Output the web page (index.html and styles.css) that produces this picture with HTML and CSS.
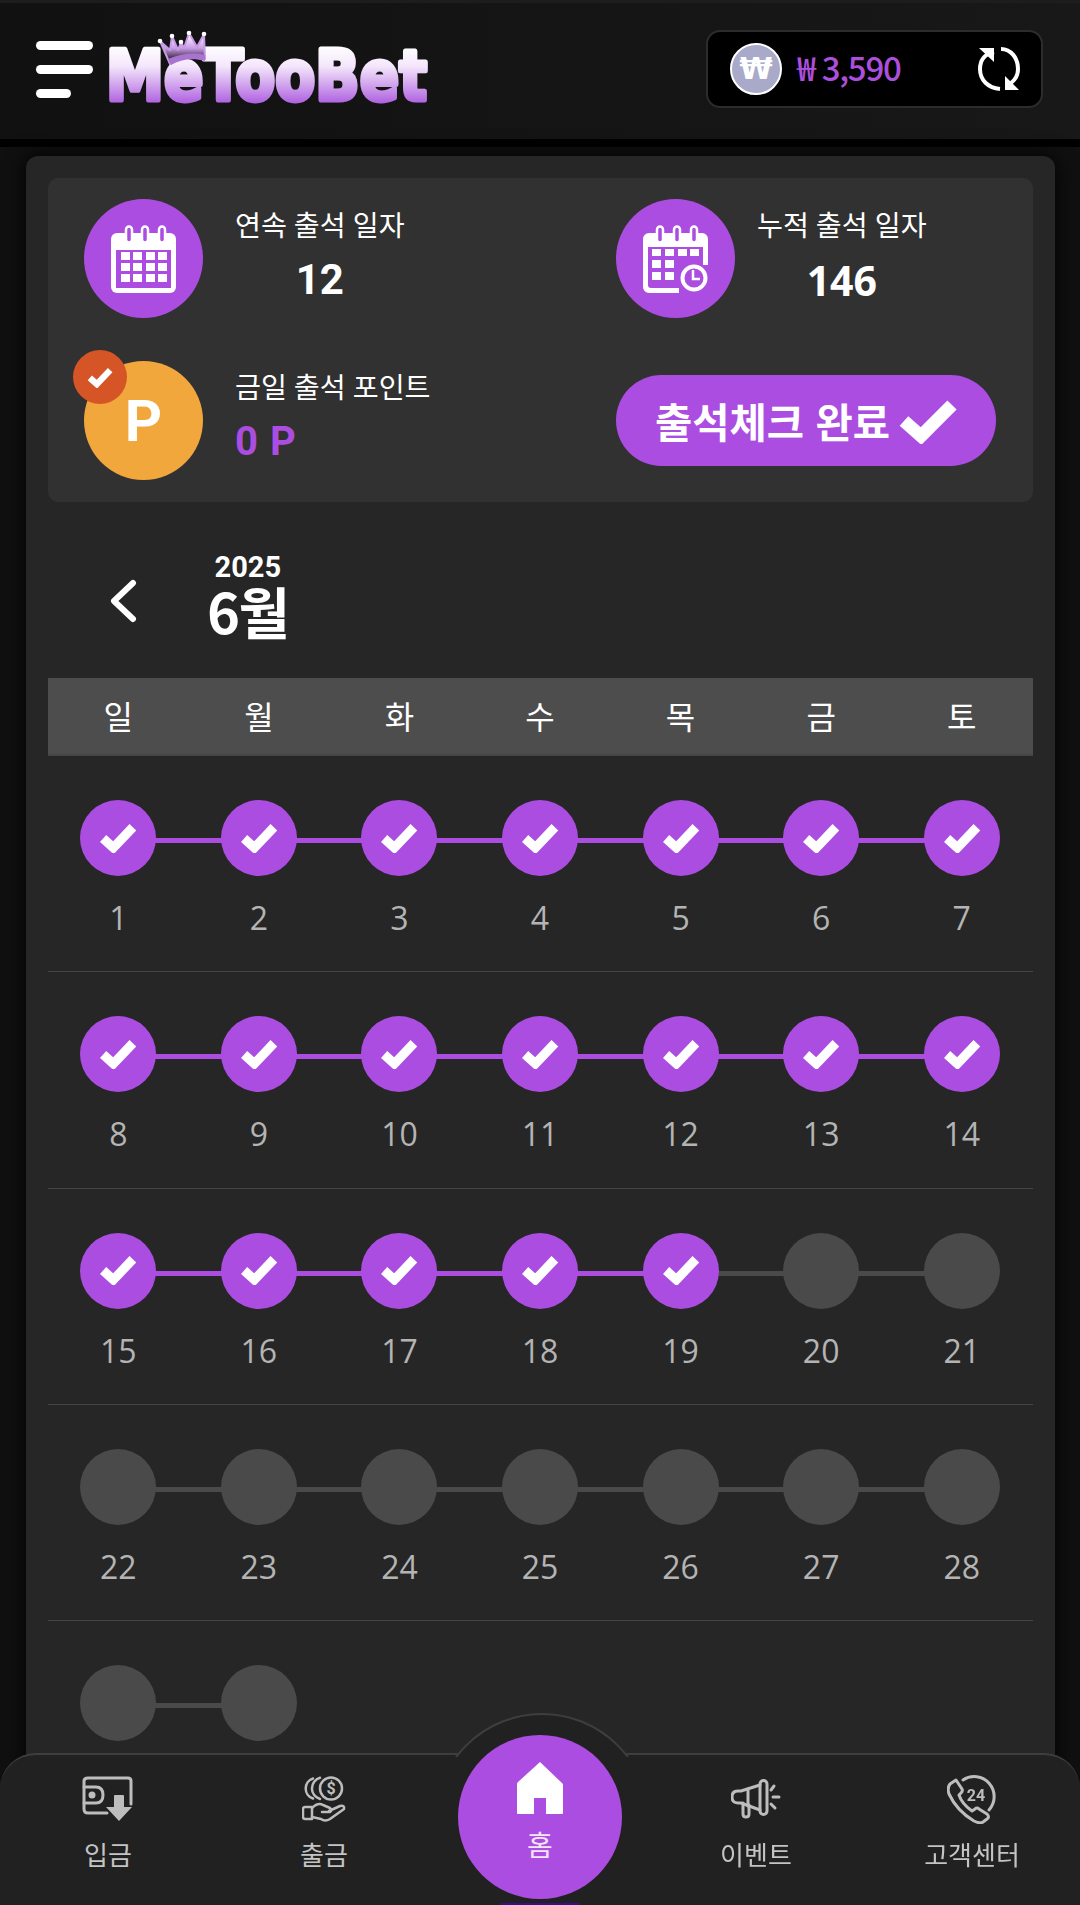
FILE: index.html
```html
<!DOCTYPE html>
<html lang="ko">
<head>
<meta charset="utf-8">
<title>MeTooBet 출석체크</title>
<link rel="stylesheet" href="styles.css">
</head>
<body>
<header class="topbar">
  <button class="burger" aria-label="메뉴"><span></span><span></span><span class="short"></span></button>
  <a class="logo" aria-label="MeTooBet">
    <svg width="330" height="80" viewBox="0 0 330 80">
      <defs>
        <linearGradient id="lg" gradientUnits="userSpaceOnUse" x1="0" y1="16" x2="0" y2="74">
          <stop offset="0" stop-color="#ffffff"/><stop offset=".35" stop-color="#f4e6fb"/><stop offset="1" stop-color="#ad5fdf"/>
        </linearGradient>
        <linearGradient id="cg" gradientUnits="userSpaceOnUse" x1="0" y1="4" x2="0" y2="30">
          <stop offset="0" stop-color="#ffffff"/><stop offset=".55" stop-color="#c79ae6"/><stop offset="1" stop-color="#241a2c"/>
        </linearGradient>
      </defs>
      <text class="logo-text" y="70" x="1" textLength="321" lengthAdjust="spacingAndGlyphs" fill="url(#lg)" stroke="url(#lg)" stroke-width="5" stroke-linejoin="round">MeTooBet</text>
      <path d="M55 11 L65 34 C76 27 88 26 100 29 L99 4 L92 17 L84 3 L79 18 L76 12 L73 20 L67 6 L65 20Z" fill="url(#cg)" stroke="#c79ae6" stroke-width="2" stroke-linejoin="round"/>
      <path d="M63 29 L66 35 C76 29 88 28 100 31 L100 25 C88 22 75 24 63 29Z" fill="#a874d0"/>
      <circle cx="55" cy="11" r="2.3" fill="#fff"/><circle cx="67" cy="6" r="2.3" fill="#fff"/><circle cx="76" cy="12" r="2.3" fill="#fff"/><circle cx="84" cy="3" r="2.3" fill="#fff"/><circle cx="99" cy="4" r="2.3" fill="#fff"/>
    </svg>
  </a>
  <div class="wallet">
    <span class="coin">₩</span>
    <span class="amount"><span class="won">₩</span>3,590</span>
    <svg class="refresh" width="44" height="46" viewBox="0 0 44 46" fill="none" stroke="#fff" stroke-width="4">
      <path d="M17 6 C7 8 3 15 3 23 C3 34 11 42 23 43"/>
      <path d="M24 3 C34 3 41 12 41 23 C41 29 38 34 34 37"/>
      <path d="M2 2 H17 V16Z" fill="#fff" stroke="none"/>
      <path d="M28 30 V44 H42Z" fill="#fff" stroke="none"/>
    </svg>
  </div>
</header>

<main class="card">
  <section class="panel">
    <div class="stat">
      <span class="disc">
        <svg width="66" height="68" viewBox="0 0 66 68">
          <rect x="0" y="8" width="65" height="60" rx="6" fill="#fff"/>
          <rect x="5" y="25" width="55" height="38" fill="#ac4de2"/>
          <g fill="#fff">
            <rect x="10" y="27" width="9" height="8"/><rect x="22" y="27" width="9" height="8"/><rect x="35" y="27" width="9" height="8"/><rect x="47" y="27" width="9" height="8"/>
            <rect x="10" y="38" width="9" height="8"/><rect x="22" y="38" width="9" height="8"/><rect x="35" y="38" width="9" height="8"/><rect x="47" y="38" width="9" height="8"/>
            <rect x="10" y="49" width="9" height="8"/><rect x="22" y="49" width="9" height="8"/><rect x="35" y="49" width="9" height="8"/><rect x="47" y="49" width="9" height="8"/>
          </g>
          <g fill="#ac4de2" stroke="#fff" stroke-width="2.5">
            <rect x="15" y="1.5" width="6" height="16" rx="3"/><rect x="31" y="1.5" width="6" height="16" rx="3"/><rect x="48" y="1.5" width="6" height="16" rx="3"/>
          </g>
        </svg>
      </span>
      <div class="stat-text">
        <span class="stat-label">연속 출석 일자</span>
        <strong class="stat-num roboto">12</strong>
      </div>
    </div>
    <div class="stat stat-right">
      <span class="disc">
        <svg width="66" height="68" viewBox="0 0 66 68">
          <path d="M0 14 a6 6 0 0 1 6-6 H59 a6 6 0 0 1 6 6 V40 H60 V22 H5 V60 q0 3 3 3 H36 V68 H6 a6 6 0 0 1-6-6Z" fill="#fff"/>
          <g fill="#fff">
            <rect x="9" y="24" width="9" height="7"/><rect x="22" y="24" width="9" height="7"/><rect x="35" y="24" width="9" height="7"/><rect x="47" y="24" width="9" height="7"/>
            <rect x="9" y="35" width="9" height="8"/><rect x="22" y="35" width="9" height="8"/>
            <rect x="9" y="47" width="9" height="8"/><rect x="22" y="47" width="9" height="8"/>
          </g>
          <circle cx="51" cy="53" r="15" fill="#ac4de2"/>
          <circle cx="51" cy="53" r="11.5" fill="none" stroke="#fff" stroke-width="4"/>
          <path d="M50 45 V54 H57" fill="none" stroke="#fff" stroke-width="2.5"/>
          <g fill="#ac4de2" stroke="#fff" stroke-width="2.5">
            <rect x="14" y="1.5" width="6" height="16" rx="3"/><rect x="31" y="1.5" width="6" height="16" rx="3"/><rect x="48" y="1.5" width="6" height="16" rx="3"/>
          </g>
        </svg>
      </span>
      <div class="stat-text">
        <span class="stat-label">누적 출석 일자</span>
        <strong class="stat-num stat-num-total opensans">146</strong>
      </div>
    </div>
    <div class="stat">
      <span class="disc disc-point">P
        <span class="badge">
          <svg width="26" height="21" viewBox="0 0 37 29"><polyline points="4,15 14,24 33,4" fill="none" stroke="#fff" stroke-width="9"/></svg>
        </span>
      </span>
      <div class="stat-text stat-text-left">
        <span class="stat-label">금일 출석 포인트</span>
        <strong class="stat-points">0 P</strong>
      </div>
    </div>
    <button class="done-btn">출석체크 완료
      <svg width="58" height="46" viewBox="0 0 58 46"><polyline points="5,23 22,38 53,7" fill="none" stroke="#fff" stroke-width="13"/></svg>
    </button>
  </section>

  <section class="cal-head">
    <svg class="prev" width="28" height="44" viewBox="0 0 28 44"><polyline points="24,4 5,22 24,40" fill="none" stroke="#fff" stroke-width="6" stroke-linecap="round" stroke-linejoin="round"/></svg>
    <div class="cal-title">
      <span class="cal-year">2025</span>
      <span class="cal-month">6월</span>
    </div>
  </section>

  <div class="weekdays"><span>일</span><span>월</span><span>화</span><span>수</span><span>목</span><span>금</span><span>토</span></div>

  <div class="week">
    <div class="day done"><i class="dot"><svg class="tick" viewBox="0 0 37 29"><polyline points="4,15 14,24 33,4"/></svg></i><b>1</b></div>
    <div class="day done"><i class="dot"><svg class="tick" viewBox="0 0 37 29"><polyline points="4,15 14,24 33,4"/></svg></i><b>2</b></div>
    <div class="day done"><i class="dot"><svg class="tick" viewBox="0 0 37 29"><polyline points="4,15 14,24 33,4"/></svg></i><b>3</b></div>
    <div class="day done"><i class="dot"><svg class="tick" viewBox="0 0 37 29"><polyline points="4,15 14,24 33,4"/></svg></i><b>4</b></div>
    <div class="day done"><i class="dot"><svg class="tick" viewBox="0 0 37 29"><polyline points="4,15 14,24 33,4"/></svg></i><b>5</b></div>
    <div class="day done"><i class="dot"><svg class="tick" viewBox="0 0 37 29"><polyline points="4,15 14,24 33,4"/></svg></i><b>6</b></div>
    <div class="day done last"><i class="dot"><svg class="tick" viewBox="0 0 37 29"><polyline points="4,15 14,24 33,4"/></svg></i><b>7</b></div>
  </div>
  <div class="week">
    <div class="day done"><i class="dot"><svg class="tick" viewBox="0 0 37 29"><polyline points="4,15 14,24 33,4"/></svg></i><b>8</b></div>
    <div class="day done"><i class="dot"><svg class="tick" viewBox="0 0 37 29"><polyline points="4,15 14,24 33,4"/></svg></i><b>9</b></div>
    <div class="day done"><i class="dot"><svg class="tick" viewBox="0 0 37 29"><polyline points="4,15 14,24 33,4"/></svg></i><b>10</b></div>
    <div class="day done"><i class="dot"><svg class="tick" viewBox="0 0 37 29"><polyline points="4,15 14,24 33,4"/></svg></i><b>11</b></div>
    <div class="day done"><i class="dot"><svg class="tick" viewBox="0 0 37 29"><polyline points="4,15 14,24 33,4"/></svg></i><b>12</b></div>
    <div class="day done"><i class="dot"><svg class="tick" viewBox="0 0 37 29"><polyline points="4,15 14,24 33,4"/></svg></i><b>13</b></div>
    <div class="day done last"><i class="dot"><svg class="tick" viewBox="0 0 37 29"><polyline points="4,15 14,24 33,4"/></svg></i><b>14</b></div>
  </div>
  <div class="week">
    <div class="day done"><i class="dot"><svg class="tick" viewBox="0 0 37 29"><polyline points="4,15 14,24 33,4"/></svg></i><b>15</b></div>
    <div class="day done"><i class="dot"><svg class="tick" viewBox="0 0 37 29"><polyline points="4,15 14,24 33,4"/></svg></i><b>16</b></div>
    <div class="day done"><i class="dot"><svg class="tick" viewBox="0 0 37 29"><polyline points="4,15 14,24 33,4"/></svg></i><b>17</b></div>
    <div class="day done"><i class="dot"><svg class="tick" viewBox="0 0 37 29"><polyline points="4,15 14,24 33,4"/></svg></i><b>18</b></div>
    <div class="day done edge"><i class="dot"><svg class="tick" viewBox="0 0 37 29"><polyline points="4,15 14,24 33,4"/></svg></i><b>19</b></div>
    <div class="day"><i class="dot"></i><b>20</b></div>
    <div class="day last"><i class="dot"></i><b>21</b></div>
  </div>
  <div class="week">
    <div class="day"><i class="dot"></i><b>22</b></div>
    <div class="day"><i class="dot"></i><b>23</b></div>
    <div class="day"><i class="dot"></i><b>24</b></div>
    <div class="day"><i class="dot"></i><b>25</b></div>
    <div class="day"><i class="dot"></i><b>26</b></div>
    <div class="day"><i class="dot"></i><b>27</b></div>
    <div class="day last"><i class="dot"></i><b>28</b></div>
  </div>
  <div class="week">
    <div class="day"><i class="dot"></i><b>29</b></div>
    <div class="day last"><i class="dot"></i><b>30</b></div>
  </div>
</main>

<nav class="tabbar">
  <div class="bump"></div>
  <a class="tab tab-1">
    <svg width="52" height="46" viewBox="0 0 52 46" fill="none" stroke="#bdbdbd" stroke-width="3" stroke-linecap="round" stroke-linejoin="round">
      <path d="M25 37 H6 Q2 37 2 33 V5 Q2 2 6 2 H46 Q49 2 49 5 V28"/>
      <path d="M2 11 H14 Q21 11 21 19 Q21 27 14 27 H2"/>
      <circle cx="10" cy="19" r="3.5" fill="#bdbdbd" stroke="none"/>
      <path d="M32 20 Q32 19 33 19 H41 Q42 19 42 20 V31 H50 L37 45 24 31 H32Z" fill="#bdbdbd" stroke="none"/>
    </svg>
    <span>입금</span>
  </a>
  <a class="tab tab-2">
    <svg width="44" height="46" viewBox="0 0 44 46" fill="none" stroke="#bdbdbd" stroke-width="2.5" stroke-linecap="round" stroke-linejoin="round">
      <path d="M11 2.5 A10.5 10.5 0 0 0 11 22.5"/>
      <path d="M18 1.8 A11 11 0 0 0 18 23"/>
      <circle cx="29" cy="12.5" r="11"/>
      <text x="29" y="18" class="icon-mini" text-anchor="middle" fill="#bdbdbd" stroke="none">$</text>
      <path d="M10 31 H3 Q1 31 1 33 V41 Q1 43 3 43 H10Z"/>
      <path d="M10 32 Q16 26 21 29 L28 32 Q31 34 28 36 H20 M27 35 L38 30 Q43 29 42 33 L28 43 Q23 46 19 43 L10 41"/>
    </svg>
    <span>출금</span>
  </a>
  <a class="tab tab-home">
    <svg width="46" height="52" viewBox="0 0 46 52"><path d="M23 0 46 22 V51 Q46 52 45 52 H29 V36 H17 V52 H1 Q0 52 0 51 V22 Q0 21 1 20Z" fill="#fff"/></svg>
    <span>홈</span>
  </a>
  <a class="tab tab-4">
    <svg width="50" height="40" viewBox="0 0 50 40" fill="none" stroke="#bdbdbd" stroke-width="3" stroke-linecap="round" stroke-linejoin="round">
      <rect x="29" y="1.5" width="7" height="34" rx="3.5"/>
      <path d="M29 6 L10 12 H7 Q1 12 1 18 Q1 24 7 24 H10 L29 31"/>
      <path d="M17 10 V27"/>
      <path d="M12 24 V35 Q12 38 15 38 Q18 38 18 35 V26"/>
      <path d="M43 7 L40 11 M42 18 H48 M40 25 L44 29"/>
    </svg>
    <span>이벤트</span>
  </a>
  <a class="tab tab-5">
    <svg width="50" height="50" viewBox="0 0 50 50" fill="none" stroke="#bdbdbd" stroke-width="3" stroke-linecap="round" stroke-linejoin="round">
      <path d="M16 6 A20 20 0 0 1 42 36"/>
      <path d="M9 6 L15 15 Q16 17 14 19 L12 21 Q15 30 25 37 L28 35 Q30 33 32 35 L40 40 Q43 43 40 45 L36 48 Q33 50 27 47 Q10 37 2 20 Q0 14 3 10Z"/>
      <text x="29" y="27" class="icon-mini" text-anchor="middle" fill="#bdbdbd" stroke="none">24</text>
    </svg>
    <span>고객센터</span>
  </a>
</nav>
</body>
</html>
```

FILE: styles.css
```css
* { box-sizing: border-box; }
html, body { margin: 0; height: 1905px; overflow: hidden; }
body {
  background: #101010;
  color: #fff;
  font-family: Roboto, "Noto Sans CJK KR", sans-serif;
}
i { font-style: normal; }

.topbar {
  height: 147px;
  display: flex;
  align-items: center;
  padding: 0 37px 8px 36px;
  background: linear-gradient(90deg, #111112, #181818);
  border-top: 3px solid #1c1d1f;
  border-bottom: 8px solid #000;
}
.burger {
  width: 58px;
  padding: 0;
  background: none;
  border: 0;
  display: flex;
  flex-direction: column;
  gap: 15px;
  margin-top: 5px;
}
.burger span { display: block; height: 9px; width: 57px; border-radius: 5px; background: #fff; }
.burger .short { width: 35px; }
.logo { display: block; margin-left: 11px; margin-top: 5px; height: 80px; }
.logo svg { display: block; overflow: visible; }
.logo-text { font-family: "DejaVu Sans", sans-serif; font-weight: 700; font-size: 70px; }

.wallet {
  margin-left: auto;
  width: 337px;
  height: 78px;
  display: flex;
  align-items: center;
  padding: 0 20px 0 22px;
  background: #000;
  border: 2px solid #2c2c2c;
  border-radius: 14px;
  margin-top: 3px;
}
.coin {
  width: 52px;
  height: 52px;
  flex: none;
  display: flex;
  align-items: center;
  justify-content: center;
  border-radius: 50%;
  background: #a9a9c9;
  border: 2px solid #fff;
  font: 700 30px "DejaVu Sans", sans-serif;
}
.amount {
  margin: -4px 0 0 15px;
  color: #ab4fdc;
  font-family: "Noto Sans CJK KR", sans-serif;
  font-weight: 500;
  font-size: 33px;
  letter-spacing: -1.2px;
}
.won { margin-right: 7px; }
.refresh { margin-left: auto; }

.card {
  margin: 9px 25px 0 26px;
  height: 1800px;
  padding: 22px 22px 0 22px;
  background: #262626;
  border-radius: 12px;
  box-shadow: 0 0 22px #000;
}
.panel {
  height: 324px;
  display: grid;
  grid-template-columns: 532px 1fr;
  grid-template-rows: 119px 119px;
  row-gap: 43px;
  padding: 21px 0 0 36px;
  background: #313131;
  border-radius: 10px;
}
.stat { display: flex; align-items: flex-start; }
.disc {
  width: 119px;
  height: 119px;
  flex: none;
  position: relative;
  display: flex;
  align-items: center;
  justify-content: center;
  border-radius: 50%;
  background: #ac4de2;
}
.disc-point { background: #f2a73d; font: 700 58px Roboto, sans-serif; }
.badge {
  position: absolute;
  left: -11px;
  top: -11px;
  width: 54px;
  height: 54px;
  display: flex;
  align-items: center;
  justify-content: center;
  border-radius: 50%;
  background: #d55526;
}
.stat-text { margin-left: 32px; display: flex; flex-direction: column; align-items: center; }
.stat-right .stat-text { margin-left: 22px; }
.stat-text-left { align-items: flex-start; }
.stat-label { font-size: 28.2px; line-height: 40px; margin-top: 8px; white-space: nowrap; }
.stat-num { font-size: 42px; line-height: 52px; margin-top: 7px; }
.stat-num-total { font-size: 41px; }
.roboto { font-family: Roboto, sans-serif; }
.opensans { font-family: "Open Sans", sans-serif; }
.stat-points { color: #ac4de2; font: 700 40px/52px Roboto, sans-serif; letter-spacing: 1px; margin-top: 7px; }
.done-btn {
  align-self: center;
  width: 380px;
  height: 91px;
  display: flex;
  align-items: center;
  justify-content: center;
  gap: 9px;
  padding: 0;
  border: 0;
  border-radius: 46px;
  background: #ac4de2;
  color: #fff;
  font: 700 40.5px "Noto Sans CJK KR", sans-serif;
}

.cal-head { height: 176px; display: flex; align-items: center; padding-left: 61px; }
.prev { margin-top: 22px; }
.cal-title { margin: 9px 0 0 70px; display: flex; flex-direction: column; align-items: center; }
.cal-year { font: 700 29px/30px Roboto, sans-serif; }
.cal-month { font: 700 56px/56px "Noto Sans CJK KR", sans-serif; letter-spacing: -1.5px; }

.weekdays {
  height: 78px;
  display: grid;
  grid-template-columns: repeat(7, 1fr);
  align-items: start;
  line-height: 74px;
  padding-right: 1px;
  text-align: center;
  background: #4d4d4d;
  border-bottom: 2px solid #464646;
  font-family: "Noto Sans CJK KR", sans-serif;
  font-size: 32px;
}

.week {
  height: 216.25px;
  padding: 44px 1px 0 0;
  display: grid;
  grid-template-columns: repeat(7, 1fr);
  align-content: start;
  border-bottom: 1px solid #464646;
}
.day { position: relative; display: flex; flex-direction: column; align-items: center; }
.day::after {
  content: "";
  position: absolute;
  left: 50%;
  width: 100%;
  top: 38px;
  height: 5px;
  background: #4a4a4a;
}
.day.done::after { background: #ac4de2; }
.day.edge::after { background: #4a4a4a; }
.day.last::after { display: none; }
.dot {
  position: relative;
  z-index: 1;
  width: 76px;
  height: 76px;
  display: flex;
  align-items: center;
  justify-content: center;
  border-radius: 50%;
  background: #4a4a4a;
}
.done .dot { background: #ac4de2; }
.tick { width: 38px; height: 30px; margin-top: -1px; }
.tick polyline { fill: none; stroke: #fff; stroke-width: 9; }
.day b {
  margin-top: 20px;
  font: 400 32px/44px "Open Sans", sans-serif;
  color: #b4b4b4;
}

.tabbar {
  position: fixed;
  left: 0;
  right: 0;
  bottom: 0;
  height: 152px;
  z-index: 5;
  display: grid;
  grid-template-columns: repeat(5, 1fr);
  background: #212121;
  border-top: 2px solid #3e3e3e;
  border-radius: 36px 36px 0 0;
}
.bump {
  position: absolute;
  left: 50%;
  top: -44px;
  width: 216px;
  height: 46px;
  margin-left: -108px;
  overflow: hidden;
}
.bump::before {
  content: "";
  position: absolute;
  left: 2px;
  top: 2px;
  width: 212px;
  height: 212px;
  border-radius: 50%;
  background: #212121;
  border: 2px solid #3e3e3e;
}
.tab {
  position: relative;
  display: flex;
  flex-direction: column;
  align-items: center;
  color: #c4c4c4;
  font: 400 26px/30px "Noto Sans CJK KR", sans-serif;
}
.tab-1 { grid-column: 1; }
.tab-2 { grid-column: 2; }
.tab-4 { grid-column: 4; }
.tab-5 { grid-column: 5; }
.tab svg { height: 50px; margin-top: 19px; }
.tab span { margin-top: 15px; }
.icon-mini { font: 700 16px Roboto, sans-serif; }
.tab-home {
  position: absolute;
  left: 458px;
  top: -20px;
  width: 164px;
  height: 164px;
  border-radius: 50%;
  background: #ac4de2;
  color: #f3e6fb;
  font-size: 28px;
}
.tab-home::after {
  content: "";
  position: absolute;
  left: 43px;
  top: 168px;
  width: 78px;
  height: 3px;
  background: #3c0d8a;
}
.tab-home svg { height: 52px; margin-top: 27px; }
.tab-home span { margin-top: 15px; }
```
